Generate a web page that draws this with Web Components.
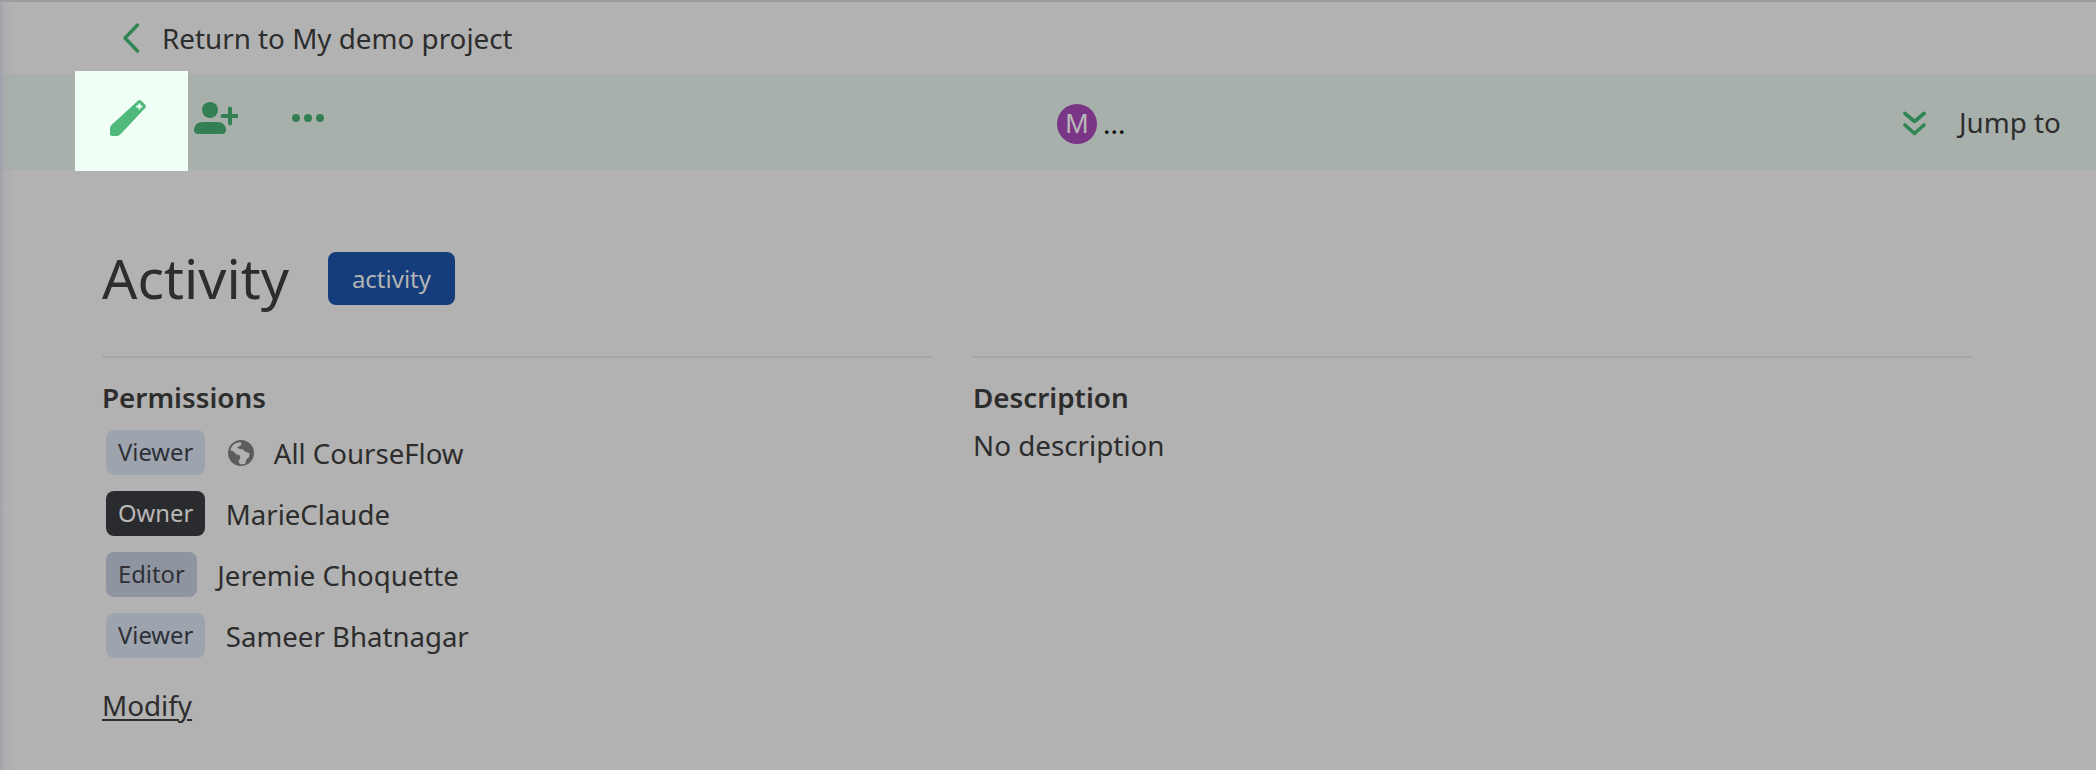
<!DOCTYPE html>
<html><head><meta charset="utf-8">
<style>
html,body{margin:0;padding:0;background:#b2b2b2;height:770px;overflow:hidden}
body{font-family:"Noto Sans",sans-serif;color:#2d2d2d}
</style></head>
<body>
<cf-page>
  <cf-return slot="return">Return to My demo project</cf-return>
  <cf-toolbar slot="toolbar"></cf-toolbar>
  <cf-header slot="header" title-text="Activity" tag="activity"></cf-header>
  <cf-section slot="left" heading="Permissions">
    <cf-perm role="Viewer" kind="viewer" globe>All CourseFlow</cf-perm>
    <cf-perm role="Owner" kind="owner">MarieClaude</cf-perm>
    <cf-perm role="Editor" kind="editor">Jeremie Choquette</cf-perm>
    <cf-perm role="Viewer" kind="viewer">Sameer Bhatnagar</cf-perm>
    <cf-link>Modify</cf-link>
  </cf-section>
  <cf-section slot="right" heading="Description">
    <cf-text>No description</cf-text>
  </cf-section>
</cf-page>
<script>
function def(name,html,init){
  customElements.define(name,class extends HTMLElement{
    constructor(){super();this.attachShadow({mode:'open'}).innerHTML=html;}
    connectedCallback(){if(init)init.call(this,this.shadowRoot);}
  });
}
def('cf-page',`<style>
:host{display:block;height:770px;box-sizing:border-box;border-top:2px solid #9c9c9c;overflow:hidden;position:relative}
.edge{position:absolute;left:0;top:0;bottom:0;width:16px;background:linear-gradient(90deg,rgba(150,150,165,.55),rgba(150,150,165,.12) 30%,rgba(150,150,165,0));pointer-events:none}
.body{padding:0 124px 0 102px}
.cols{display:grid;grid-template-columns:831px 999px;column-gap:40px}
</style>
<slot name="return"></slot><slot name="toolbar"></slot>
<div class="body"><slot name="header"></slot>
<div class="cols"><slot name="left"></slot><slot name="right"></slot></div></div><div class="edge"></div>`);

def('cf-return',`<style>
:host{display:flex;align-items:center;height:72px;padding-left:122px;font-size:27.8px;line-height:38px}
svg{width:18px;height:32px;margin-right:22px;flex:none}
</style>
<svg viewBox="0 0 18 32"><path d="M15.500 3 3 16l12.500 13" fill="none" stroke="#2f8554" stroke-width="3.400" stroke-linecap="round" stroke-linejoin="round"/></svg><slot></slot>`);

def('cf-toolbar',`<style>
:host{display:flex;align-items:center;height:96px;background:#a8b0ac;position:relative}
.edit{position:absolute;left:75px;top:-3px;width:113px;height:100px;background:#f0fff6;box-sizing:border-box;padding:29px 0 0 35px}
.left{display:flex;align-items:center;margin:0 0 8px 194px;gap:58px}
.center{position:absolute;left:1057px;top:30px;display:flex;align-items:flex-start}
.av{width:40px;height:40px;border-radius:50%;background:#7b3586;color:#b8b8b8;font-size:28px;line-height:40px;text-align:center;font-family:"Liberation Sans",sans-serif}
.dots{font-size:27.8px;line-height:38px;color:#0a0a0a;margin-left:6px;position:relative;top:0}
.right{position:absolute;left:1903px;top:30px;display:flex;align-items:center}
.right span{font-size:27.8px;line-height:38px;margin-left:33px;color:#2d2d2d;position:relative;top:-1px}
svg{display:block}
</style>
<div class="edit"><svg width="36" height="36" viewBox="0 0 36 36"><path fill="#50b87a" d="M28.200.6c.8-.8 2-.8 2.800 0l4.400 4.400c.8.800.8 2 0 2.800L11 33.700c-1.400 1.500-3 2.300-5 2.300H2c-1.100 0-2-.9-2-2v-5c0-1.500.5-2.800 1.500-3.900z"/><path fill="#f0fff6" d="M27.600 5.500h2.300v-1.900h2v1.900h1.900v2h-1.900v2h-2v-2h-2.300z" transform="translate(-1.500 0)"/></svg></div>
<div class="left">
<svg width="44" height="32" viewBox="0 0 44 32"><circle cx="16" cy="8" r="8" fill="#348054"/><path fill="#348054" d="M9 20h14c5.500 0 9 3.500 9 8v0c0 2.500-1.500 4-4 4H4c-2.500 0-4-1.500-4-4v0c0-4.500 3.500-8 9-8z"/><path d="M36 6.500v15M28.500 14h15" stroke="#348054" stroke-width="4" stroke-linecap="round"/></svg>
<svg width="32" height="8" viewBox="0 0 32 8" style="margin-left:-4px"><circle cx="4" cy="4" r="4" fill="#348054"/><circle cx="16" cy="4" r="4" fill="#348054"/><circle cx="28" cy="4" r="4" fill="#348054"/></svg>
</div>
<div class="center"><div class="av">M</div><div class="dots">...</div></div>
<div class="right"><svg width="23" height="25" viewBox="0 0 23 25"><path d="M2 2.500l9.500 8 9.500-8M2 14l9.500 8.500L21 14" fill="none" stroke="#2f8554" stroke-width="3.600" stroke-linecap="round" stroke-linejoin="round"/></svg><span>Jump to</span></div>`);

def('cf-header',`<style>
:host{display:flex;align-items:center;height:186px;box-sizing:border-box;padding:34px 0 4px}
h1{margin:0;font-size:55.4px;font-weight:400;line-height:76px;color:#2d2d2d}
.tag{margin-left:39px;width:127px;height:53px;box-sizing:border-box;border-radius:8px;background:#153d7c;color:#b4b4b4;font-size:24px;line-height:53px;text-align:center}
</style><h1></h1><div class="tag"></div>`,function(s){
  s.querySelector('h1').textContent=this.getAttribute('title-text');
  s.querySelector('.tag').textContent=this.getAttribute('tag');
});

def('cf-section',`<style>
:host{display:block;border-top:2px solid #a5a5ab;padding-top:20px}
h2{margin:0 0 3px;font-size:27.8px;font-weight:600;line-height:38px;color:#2d2d2d}
</style><h2></h2><slot></slot>`,function(s){
  s.querySelector('h2').textContent=this.getAttribute('heading');
});

const GLOBE=`<svg class="g" width="26" height="26" viewBox="0 0 26 26"><path fill="#5c5c5c" fill-rule="evenodd" d="M13 0a13 13 0 1 1 0 26 13 13 0 0 1 0-26zM7.500 3.300A11 11 0 0 0 2.300 10.500l2.700.5 3.500 3.500 3 .5 1 3-2 3 1.500 3.200c.5.100 1 .1 1.500.1 1.300 0 2.500-.2 3.600-.6l1.400-4.400 2.500-2 .5-4-4-1.500-3-2.500h-2.500L9 7.500 12 6l1.500-1.500L13 2.500l-2-.3z"/></svg>`;
def('cf-perm',`<style>
:host{display:flex;align-items:center;height:45px;margin:0 0 16px 4px;font-size:27.6px;line-height:38px}
:host(:first-child){margin-top:14px}
.b{height:45px;box-sizing:border-box;border-radius:8px;font-size:23.8px;line-height:45px;padding:0 12px;margin-right:20.500px;flex:none}
.viewer{background:#9ea4ae;color:#2d3036}
.owner{background:#2a2b2e;color:#b8b8b8}
.editor{background:#8f95a0;color:#2d3036}
#i{display:flex}
.g{margin:0 19.500px 0 2.500px;flex:none}
</style><span class="b"></span><span id="i"></span><span class="t"><slot></slot></span>`,function(s){
  const b=s.querySelector('.b');b.textContent=this.getAttribute('role');b.classList.add(this.getAttribute('kind'));
  if(this.hasAttribute('globe'))s.querySelector('#i').innerHTML=GLOBE;
});
def('cf-link',`<style>
:host{display:block;font-size:27.8px;line-height:38px;text-decoration:underline;text-underline-offset:3px;text-decoration-thickness:2px;margin-top:28px}
</style><slot></slot>`);
def('cf-text',`<style>:host{display:block;font-size:27.8px;line-height:38px;margin-top:10px}</style><slot></slot>`);
</script>
</body></html>
